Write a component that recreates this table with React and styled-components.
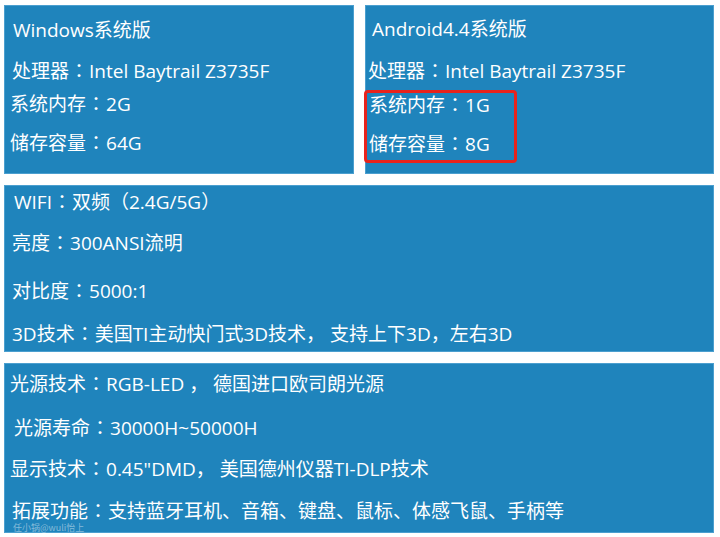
import React from "react";
import styled, { createGlobalStyle } from "styled-components";

const Global = createGlobalStyle`
  html, body { margin: 0; padding: 0; background: #ffffff; }
  body { width: 720px; height: 537px; overflow: hidden; }
`;

const Page = styled.div`
  width: 720px;
  height: 537px;
  box-sizing: border-box;
  padding: 5px 6px 0 4px;
  display: flex;
  flex-direction: column;
  gap: 11px;
  font-family: "Open Sans", "Noto Sans CJK SC", sans-serif;
`;

const TopRow = styled.div`
  display: grid;
  grid-template-columns: 350px 349px;
  column-gap: 11px;
  height: 169px;
`;

const Panel = styled.section`
  position: relative;
  box-sizing: border-box;
  height: ${(p) => p.$h}px;
  padding-top: ${(p) => p.$pt}px;
  background: #1f84bc;
  border: 1px solid #4b9fcf;
  color: #ffffff;
  display: flex;
  flex-direction: column;
`;

const Line = styled.div`
  font-size: 19px;
  line-height: 24px;
  height: 24px;
  white-space: pre;
  margin-top: ${(p) => p.$mt || 0}px;
  padding-left: ${(p) => p.$ml}px;
`;

const Colon = styled.span`
  font-family: "Noto Sans CJK TC", "Noto Sans CJK SC", sans-serif;
  display: inline-block;
  width: 20px;
  text-align: center;
`;

const Highlight = styled.div`
  position: absolute;
  left: -2px;
  top: 84px;
  width: 153px;
  height: 73px;
  box-sizing: border-box;
  border: 3px solid #e8231c;
  border-radius: 4px;
`;

const Watermark = styled.div`
  position: absolute;
  left: 8px;
  bottom: 0;
  font-size: 9px;
  line-height: 9px;
  color: rgba(255, 255, 255, 0.45);
  font-family: "Noto Sans CJK SC", sans-serif;
`;

const Item = ({ label, value, ...rest }) => (
  <Line {...rest}>
    {label}
    <Colon>：</Colon>
    {value}
  </Line>
);

export default function App() {
  return (
    <>
      <Global />
      <Page>
        <TopRow>
          <Panel $h={169} $pt={12}>
            <Line $ml={8}>Windows系统版</Line>
            <Item $ml={7} $mt={16} label="处理器" value="Intel Baytrail Z3735F" />
            <Item $ml={5} $mt={9} label="系统内存" value="2G" />
            <Item $ml={5} $mt={15} label="储存容量" value="64G" />
          </Panel>
          <Panel $h={169} $pt={11}>
            <Line $ml={6}>Android4.4系统版</Line>
            <Item $ml={2} $mt={17} label="处理器" value="Intel Baytrail Z3735F" />
            <Item $ml={3} $mt={10} label="系统内存" value="1G" />
            <Item $ml={3} $mt={15} label="储存容量" value="8G" />
            <Highlight />
          </Panel>
        </TopRow>
        <Panel $h={167} $pt={3}>
          <Item $ml={9} label="WIFI" value="双频（2.4G/5G）" />
          <Item $ml={7} $mt={17} label="亮度" value="300ANSI流明" />
          <Item $ml={7} $mt={24} label="对比度" value="5000:1" />
          <Item $ml={7} $mt={19} label="3D技术" value="美国TI主动快门式3D技术， 支持上下3D，左右3D" />
        </Panel>
        <Panel $h={170} $pt={7}>
          <Item $ml={5} label="光源技术" value="RGB-LED ， 德国进口欧司朗光源" />
          <Item $ml={9} $mt={20} label="光源寿命" value="30000H~50000H" />
          <Item $ml={5} $mt={17} label="显示技术" value={'0.45"DMD， 美国德州仪器TI-DLP技术'} />
          <Item $ml={7} $mt={18} label="拓展功能" value="支持蓝牙耳机、音箱、键盘、鼠标、体感飞鼠、手柄等" />
          <Watermark>任小锅@wuli怡上</Watermark>
        </Panel>
      </Page>
    </>
  );
}
